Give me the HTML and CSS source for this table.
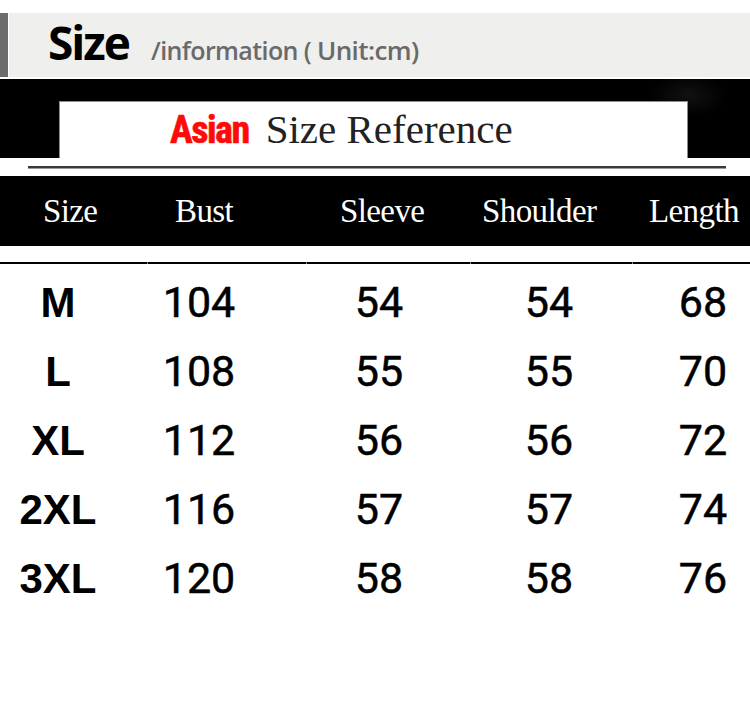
FILE: index.html
```html
<!DOCTYPE html>
<html lang="en">
<head>
<meta charset="utf-8">
<title>Size information</title>
<link rel="stylesheet" href="styles.css">
</head>
<body>
<div class="page">
  <div class="top-space"></div>
  <div class="title-bar">
    <div class="accent"></div>
    <div class="title-body">
      <span class="title">Size</span>
      <span class="subtitle">/information (&nbsp;<span class="unit">Unit:cm)</span></span>
    </div>
  </div>
  <div class="banner">
    <div class="banner-box">
      <span class="asian">Asian</span><span class="ref">Size Reference</span>
    </div>
  </div>
  <div class="divider-wrap"><div class="divider"></div></div>
  <div class="head">
    <span>Size</span>
    <span>Bust</span>
    <span>Sleeve</span>
    <span>Shoulder</span>
    <span>Length</span>
  </div>
  <div class="rule">
    <div></div><div></div><div></div><div></div><div></div>
  </div>
  <div class="rows">
    <div class="row"><span class="sz">M</span><span>104</span><span>54</span><span>54</span><span class="last">68</span></div>
    <div class="row"><span class="sz">L</span><span>108</span><span>55</span><span>55</span><span class="last">70</span></div>
    <div class="row"><span class="sz">XL</span><span>112</span><span>56</span><span>56</span><span class="last">72</span></div>
    <div class="row"><span class="sz">2XL</span><span>116</span><span>57</span><span>57</span><span class="last">74</span></div>
    <div class="row"><span class="sz">3XL</span><span>120</span><span>58</span><span>58</span><span class="last">76</span></div>
  </div>
</div>
</body>
</html>
```
FILE: styles.css
```css
html, body {
  margin: 0;
  padding: 0;
  background: #fff;
}
.page {
  width: 750px;
  height: 707px;
  overflow: hidden;
  background: #fff;
}
.top-space {
  height: 13px;
}
.title-bar {
  display: flex;
  gap: 1px;
  height: 64px;
}
.accent {
  width: 8px;
  background: #6c6c6c;
}
.title-body {
  flex: 1;
  background: #efefed;
  display: flex;
  align-items: baseline;
  padding-left: 39px;
  box-sizing: border-box;
}
.title {
  font-family: "Open Sans", "Liberation Sans", sans-serif;
  font-weight: 700;
  font-size: 46px;
  letter-spacing: -2px;
  line-height: 58px;
  color: #000;
}
.subtitle {
  margin-left: 22px;
  font-family: "Open Sans", "Liberation Sans", sans-serif;
  font-weight: 600;
  font-size: 25px;
  letter-spacing: -0.6px;
  color: #6a6a6a;
}
.unit {
  font-size: 26px;
}
.banner {
  margin-top: 2px;
  height: 79px;
  background: radial-gradient(ellipse 40px 22px at 688px 16px, #111, #000 100%), #000;
  padding-top: 22px;
  box-sizing: border-box;
  padding-left: 59px;
}
.banner-box {
  width: 629px;
  height: 57px;
  box-sizing: border-box;
  background: #fff;
  border: 1px solid #8c8c8c;
  border-bottom: none;
  padding-left: 110px;
  padding-top: 2px;
  line-height: 50px;
  white-space: nowrap;
}
.asian {
  font-family: "Liberation Sans Narrow", "Roboto Condensed", "Liberation Sans", sans-serif;
  font-weight: 700;
  font-size: 38px;
  letter-spacing: -1.5px;
  color: #ff0a0a;
  -webkit-text-stroke: 0.6px #ff0a0a;
}
.ref {
  margin-left: 17px;
  font-family: "Liberation Serif", serif;
  font-size: 41px;
  color: #222;
}
.divider-wrap {
  height: 18px;
  padding: 8px 24px 0 28px;
  box-sizing: border-box;
}
.divider {
  height: 2px;
  background: #3a3a3a;
  box-shadow: 0 1px 0 #9a9a9a;
}
.head {
  height: 70px;
  background: #000;
  color: #fff;
  display: grid;
  grid-template-columns: 132px 165px 142px 167px 1fr;
  padding-left: 43px;
  font-family: "Liberation Serif", serif;
  font-size: 33px;
  line-height: 70px;
  letter-spacing: -0.6px;
}
.rule {
  margin-top: 16px;
  height: 2px;
  display: grid;
  grid-template-columns: 147px 158px 163px 161px 1fr;
  column-gap: 1px;
  background: #8a8a8a;
}
.rule div {
  background: #000;
}
.rows {
  padding-top: 4px;
}
.row {
  display: grid;
  grid-template-columns: 116px 166px 194px 146px 1fr;
  height: 69px;
  line-height: 69px;
  text-align: center;
  font-family: "Roboto", "Liberation Sans", sans-serif;
  font-weight: 400;
  font-size: 43px;
  color: #000;
  -webkit-text-stroke: 0.5px #000;
}
.row .sz {
  font-family: "Liberation Sans", Arial, sans-serif;
  font-weight: 700;
  font-size: 42px;
  -webkit-text-stroke: 0;
}
.row .last {
  padding-left: 34px;
}
```
